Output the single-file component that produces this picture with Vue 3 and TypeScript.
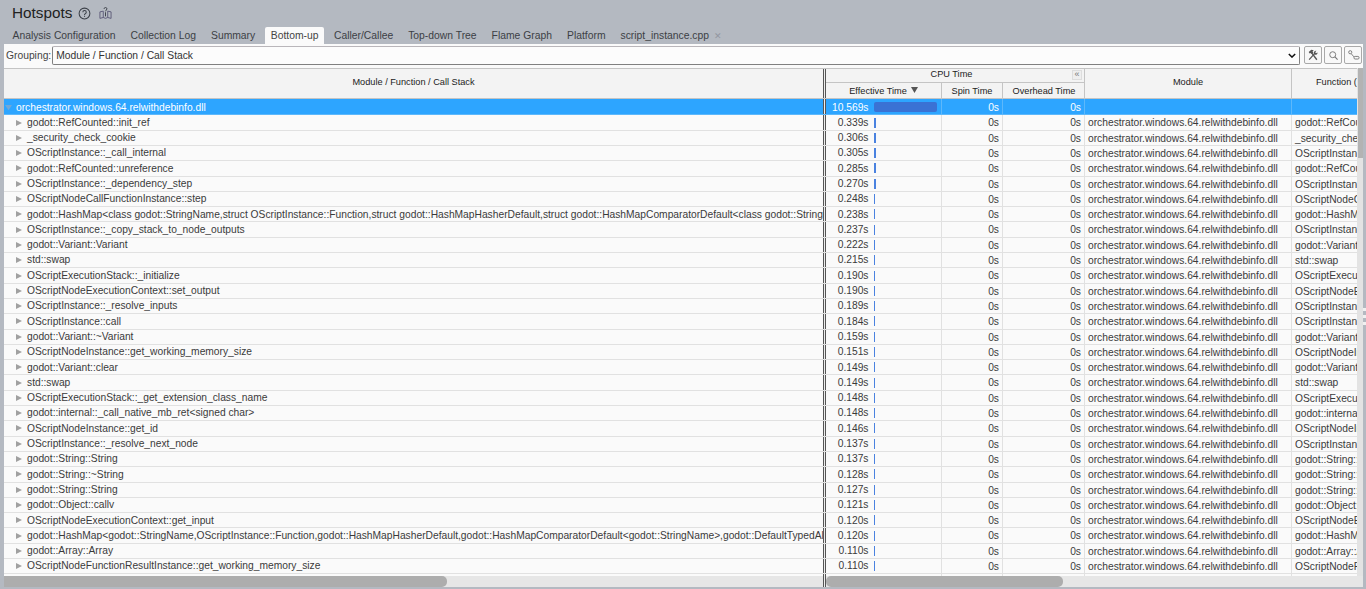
<script setup lang="ts">
interface Row { name: string; time: number }
const tabs: string[] = ['Analysis Configuration', 'Collection Log', 'Summary', 'Bottom-up', 'Caller/Callee', 'Top-down Tree', 'Flame Graph', 'Platform', 'script_instance.cpp']
const rows: Row[] = [
  { name: 'godot::RefCounted::init_ref', time: 0.339 },
  { name: '_security_check_cookie', time: 0.306 },
  { name: 'OScriptInstance::_call_internal', time: 0.305 },
  { name: 'godot::RefCounted::unreference', time: 0.285 },
  { name: 'OScriptInstance::_dependency_step', time: 0.27 },
  { name: 'OScriptNodeCallFunctionInstance::step', time: 0.248 },
  { name: 'godot::HashMap<class godot::StringName,struct OScriptInstance::Function,struct godot::HashMapHasherDefault,struct godot::HashMapComparatorDefault<class godot::StringName>,class godot::DefaultTypedAllocator>', time: 0.238 },
  { name: 'OScriptInstance::_copy_stack_to_node_outputs', time: 0.237 },
  { name: 'godot::Variant::Variant', time: 0.222 },
  { name: 'std::swap', time: 0.215 },
  { name: 'OScriptExecutionStack::_initialize', time: 0.19 },
  { name: 'OScriptNodeExecutionContext::set_output', time: 0.19 },
  { name: 'OScriptInstance::_resolve_inputs', time: 0.189 },
  { name: 'OScriptInstance::call', time: 0.184 },
  { name: 'godot::Variant::~Variant', time: 0.159 },
  { name: 'OScriptNodeInstance::get_working_memory_size', time: 0.151 },
  { name: 'godot::Variant::clear', time: 0.149 },
  { name: 'std::swap', time: 0.149 },
  { name: 'OScriptExecutionStack::_get_extension_class_name', time: 0.148 },
  { name: 'godot::internal::_call_native_mb_ret<signed char>', time: 0.148 },
  { name: 'OScriptNodeInstance::get_id', time: 0.146 },
  { name: 'OScriptInstance::_resolve_next_node', time: 0.137 },
  { name: 'godot::String::String', time: 0.137 },
  { name: 'godot::String::~String', time: 0.128 },
  { name: 'godot::String::String', time: 0.127 },
  { name: 'godot::Object::callv', time: 0.121 },
  { name: 'OScriptNodeExecutionContext::get_input', time: 0.12 },
  { name: 'godot::HashMap<godot::StringName,OScriptInstance::Function,godot::HashMapHasherDefault,godot::HashMapComparatorDefault<godot::StringName>,godot::DefaultTypedAllocator>', time: 0.12 },
  { name: 'godot::Array::Array', time: 0.11 },
  { name: 'OScriptNodeFunctionResultInstance::get_working_memory_size', time: 0.11 },
]
const moduleName = 'orchestrator.windows.64.relwithdebinfo.dll'
function barWidth(t: number): string {
  return Math.max(1, Math.round(t * 6)) + 'px'
}
</script>

<template>
  <div class="app">
    <div class="title">
      <span class="title-text">Hotspots</span>
      <svg class="ico-help" viewBox="0 0 14 14" width="13" height="13"><circle cx="7" cy="7" r="5.8" fill="none" stroke="#3a3f47" stroke-width="1.1"/><path d="M5.2 5.6c0-2.3 3.7-2.3 3.7 0 0 1.5-1.9 1.4-1.9 2.9" fill="none" stroke="#3a3f47" stroke-width="1.1"/><rect x="6.5" y="9.4" width="1.1" height="1.2" fill="#3a3f47"/></svg>
      <svg class="ico-book" viewBox="0 0 14 14" width="13" height="14"><path d="M4.6 5L1 5.8v7l3.6-1 2.4 1 2.4-1 3.6 1v-7L9.4 5M4.6 5v6.8M9.4 5v6.8" fill="none" stroke="#5c5a78" stroke-width="1"/><path d="M5.4 2.6c0-2 3.2-2 3.2 0 0 1.2-1.6 1.2-1.6 2.6" fill="none" stroke="#3a3f47" stroke-width="1"/><rect x="6.5" y="6.2" width="1" height="4.4" fill="#3a3f47"/></svg>
    </div>
    <div class="tabs">
      <div v-for="t in tabs" :key="t" class="tab" :class="{ active: t === 'Bottom-up' }">
        {{ t }}<span v-if="t === 'script_instance.cpp'" class="close">✕</span>
      </div>
    </div>
    <div class="body">
      <div class="panel">
        <div class="toolbar">
          <span class="grouping-label">Grouping:</span>
          <div class="select">
            <span>Module / Function / Call Stack</span>
            <svg viewBox="0 0 10 6" width="8" height="5"><path d="M1 1l4 4 4-4" fill="none" stroke="#111" stroke-width="1.8"/></svg>
          </div>
          <button class="tool" type="button"><svg viewBox="0 0 14 14" width="12" height="12"><path d="M11.5 12.5L5.5 4.5" stroke="#555" stroke-width="1.6" fill="none"/><path d="M2 3.5L5 1l3 .5-1.5 1.2.8 1.6-2 1.6-1.2-1.2-1 .6z" fill="#555"/><path d="M2.5 12.5L8.6 5.6" stroke="#555" stroke-width="1.4" fill="none"/><path d="M8 5.5c-.6-1.8.8-3.7 3-3.4L9.6 3.7l.9 1.3 1.8-1c.3 2-1.8 3.2-3.3 2.6z" fill="#555"/></svg></button>
          <button class="tool" type="button"><svg viewBox="0 0 14 14" width="11" height="11"><circle cx="6" cy="6" r="3.8" fill="none" stroke="#777" stroke-width="1.2"/><path d="M8.8 8.8l3.4 3.4" stroke="#777" stroke-width="1.5"/></svg></button>
          <button class="tool" type="button"><svg viewBox="0 0 14 14" width="13" height="13"><circle cx="3.5" cy="3.5" r="1.7" fill="none" stroke="#777"/><path d="M4.5 5L7.5 8.5" fill="none" stroke="#777"/><rect x="7.5" y="8" width="5.5" height="2.8" rx="1.3" fill="none" stroke="#777"/></svg></button>
        </div>
        <div class="grid-wrap">
          <div class="grid-scroll">
            <div class="head">
              <div class="hc h-name">Module / Function / Call Stack</div>
              <div class="split"></div>
              <div class="h-cpu">
                <div class="cpu-top">CPU Time<span class="collapse">«</span></div>
                <div class="cpu-sub">
                  <div class="sub c-eff">Effective Time<svg class="sort" viewBox="0 0 7 6" width="7" height="6"><path d="M0 0h7L3.5 6z" fill="#555"/></svg></div>
                  <div class="sub c-spin">Spin Time</div>
                  <div class="sub c-over">Overhead Time</div>
                </div>
              </div>
              <div class="hc c-mod">Module</div>
              <div class="hc c-fn fn-head">Function (</div>
            </div>
            <div class="row selected">
              <div class="cell c-name root"><svg class="tw" viewBox="0 0 8 8" width="7" height="7"><path d="M0 1h8L4 7z" fill="#6fa8d8"/></svg>orchestrator.windows.64.relwithdebinfo.dll</div>
              <div class="split"></div>
              <div class="cell c-eff time"><span class="t">10.569s</span><span class="bar big"></span></div>
              <div class="cell c-spin num">0s</div>
              <div class="cell c-over num">0s</div>
              <div class="cell c-mod"></div>
              <div class="cell c-fn"></div>
            </div>
            <div v-for="(r, i) in rows" :key="i" class="row">
              <div class="cell c-name child"><svg class="tw" viewBox="0 0 8 8" width="6" height="8"><path d="M0 0l8 4-8 4z" fill="#a0a0a0"/></svg><span class="label">{{ r.name }}</span></div>
              <div class="split"></div>
              <div class="cell c-eff time"><span class="t">{{ r.time.toFixed(3) }}s</span><span class="bar" :style="{ width: barWidth(r.time) }"></span></div>
              <div class="cell c-spin num">0s</div>
              <div class="cell c-over num">0s</div>
              <div class="cell c-mod">{{ moduleName }}</div>
              <div class="cell c-fn">{{ r.name }}</div>
            </div>
            <div class="row">
              <div class="cell c-name"></div>
              <div class="split"></div>
              <div class="cell c-eff"></div>
              <div class="cell c-spin"></div>
              <div class="cell c-over"></div>
              <div class="cell c-mod"></div>
              <div class="cell c-fn"></div>
            </div>
          </div>
          <div class="vbar"><div class="vthumb"></div></div>
        </div>
        <div class="hbars">
          <div class="hbar left"><div class="hthumb t1"></div></div>
          <div class="split"></div>
          <div class="hbar right"><div class="hthumb t2"></div></div>
        </div>
      </div>
      <div class="grip"><i></i><i></i><i></i></div>
    </div>
  </div>
</template>

<style>
html, body { margin: 0; padding: 0; background: #b4b9c1; overflow: hidden; }
</style>

<style scoped>
.app {
  width: 1366px;
  height: 589px;
  overflow: hidden;
  display: flex;
  flex-direction: column;
  background: #b4b9c1;
  font-family: "Liberation Sans", Arial, sans-serif;
  font-size: 10.25px;
  color: #333;
}
.title {
  height: 27px;
  box-sizing: border-box;
  padding: 0 0 1px 12px;
  display: flex;
  align-items: center;
  flex: none;
}
.title-text { font-size: 15.3px; color: #222; margin-right: 6px; }
.ico-help { margin-right: 8px; }
.tabs {
  height: 17px;
  display: flex;
  padding-left: 5px;
  flex: none;
  font-size: 10.35px;
  color: #3c3f45;
}
.tab {
  padding: 0 7.5px;
  line-height: 18px;
  white-space: nowrap;
  border-radius: 2px 2px 0 0;
}
.tab.active { background: #fafafa; padding: 0 6px; margin: 0 2px; color: #444; }
.close { color: #9296a0; font-size: 8.5px; margin-left: 5px; }
.body {
  flex: 1;
  min-height: 0;
  display: flex;
  padding-left: 4px;
}
.grip {
  width: 3px;
  flex: none;
  display: flex;
  flex-direction: column;
  justify-content: center;
  gap: 4px;
}
.grip i { display: block; height: 3px; background: #f0f0f0; }
.panel {
  flex: 1;
  min-width: 0;
  margin-bottom: 2px;
  display: flex;
  flex-direction: column;
  background: #fafafa;
}
.toolbar {
  height: 24px;
  flex: none;
  display: flex;
  align-items: flex-start;
  padding: 2px 1px 0 2px;
  box-sizing: border-box;
  gap: 2px;
}
.grouping-label { font-size: 10.3px; color: #444; line-height: 19px; margin-right: -1px; }
.select {
  flex: 1;
  height: 18.5px;
  box-sizing: border-box;
  border: 1px solid #808080;
  border-top-color: #b9b6ba;
  border-radius: 2px;
  background: #fcfcfc;
  display: flex;
  align-items: center;
  justify-content: space-between;
  padding: 0 3px;
  color: #333;
  font-size: 10.3px;
  margin-right: 2px;
}
.tool {
  width: 18px;
  height: 18px;
  box-sizing: border-box;
  padding: 0;
  border: 1px solid #a9a9a9;
  border-radius: 2px;
  background: #f8f8f8;
  display: flex;
  align-items: center;
  justify-content: center;
}
.grid-wrap {
  flex: 1;
  min-height: 0;
  display: flex;
  overflow: hidden;
}
.grid-scroll {
  width: 1353px;
  overflow: hidden;
  flex: none;
}
.head {
  display: flex;
  height: 31px;
  box-sizing: border-box;
  background: #f3f3f3;
  border-top: 1px solid #c4c4c4;
  border-bottom: 1px solid #c4c4c4;
  color: #222;
  font-size: 9.2px;
}
.hc {
  display: flex;
  align-items: center;
  justify-content: center;
  box-sizing: border-box;
  white-space: nowrap;
  overflow: hidden;
  padding-bottom: 3px;
}
.h-name { width: 819px; flex: none; }
.fn-head { justify-content: flex-start; padding-left: 24px; }
.split {
  width: 3px;
  flex: none;
  box-sizing: border-box;
  border-left: 1px solid #555;
  border-right: 1px solid #555;
  background: #eee;
}
.h-cpu { width: 259px; flex: none; display: flex; flex-direction: column; border-right: 1px solid #c4c4c4; box-sizing: border-box; }
.cpu-top {
  height: 14px;
  line-height: 11px;
  font-size: 9.2px;
  text-align: center;
  position: relative;
  padding-right: 7px;
  border-bottom: 1px solid #c4c4c4;
  box-sizing: border-box;
}
.collapse {
  position: absolute;
  right: 2px;
  top: 1px;
  width: 8px;
  height: 8px;
  line-height: 7px;
  font-size: 9px;
  border: 1px solid #ddd;
  background: #eee;
  color: #777;
  text-align: center;
}
.cpu-sub { flex: 1; display: flex; }
.sub {
  display: flex;
  align-items: center;
  justify-content: center;
  box-sizing: border-box;
  border-right: 1px solid #c4c4c4;
  white-space: pre;
}
.sub.c-over { border-right: 0; }
.sort { margin: 0 0 1px 4px; }
.c-eff { width: 116px; flex: none; }
.c-spin { width: 61px; flex: none; }
.c-over { width: 82px; flex: none; }
.c-mod { width: 207px; flex: none; box-sizing: border-box; border-right: 1px solid #c4c4c4; }
.c-fn { width: 65px; flex: none; }
.row {
  display: flex;
  height: 15.3px;
  box-sizing: border-box;
  border-bottom: 1px solid #e1e1e1;
  background: #fafafa;
  color: #3a3a3a;
  line-height: 15.5px;
}
.row.selected {
  height: 16.4px;
  background: #2da5ff;
  color: #fff;
  border-bottom: 1px solid #5db8fb;
  line-height: 15.4px;
}
.cell {
  overflow: hidden;
  white-space: nowrap;
  box-sizing: border-box;
  padding: 0 3px;
  border-right: 1px solid #e1e1e1;
}
.selected .cell { border-right-color: #5db8fb; padding-top: 1px; }
.c-name { width: 819px; flex: none; border-right: 0; padding: 0; display: flex; align-items: center; }
.c-name.root { padding-left: 1px; }
.c-name.child { padding-left: 12px; }
.label { display: block; }
.tw { flex: none; margin-right: 5px; }
.root .tw { margin-right: 4px; }
.c-fn { border-right: 0; }
.num { text-align: right; }
.time { display: flex; align-items: center; padding: 0 0 0 6px; }
.t { width: 36.5px; text-align: right; flex: none; margin-right: 5.5px; }
.bar { height: 10px; background: #4a82e0; display: block; flex: none; }
.bar.big { width: 63px; background: #3a72d4; border-radius: 2px; }
.vbar { flex: 1; background: #e3e3e3; position: relative; }
.vthumb { position: absolute; left: 1px; right: 0; top: 0; height: 90px; background: #b3b3b3; }
.hbars {
  height: 11px;
  flex: none;
  display: flex;
  background: #e6e6e6;
}
.hbar.left { width: 819px; flex: none; }
.hbar.right { flex: 1; }
.hthumb { height: 11px; background: #adadad; }
.t1 { width: 443px; border-radius: 0 5px 5px 0; }
.t2 { width: 237px; border-radius: 5px; }
</style>
